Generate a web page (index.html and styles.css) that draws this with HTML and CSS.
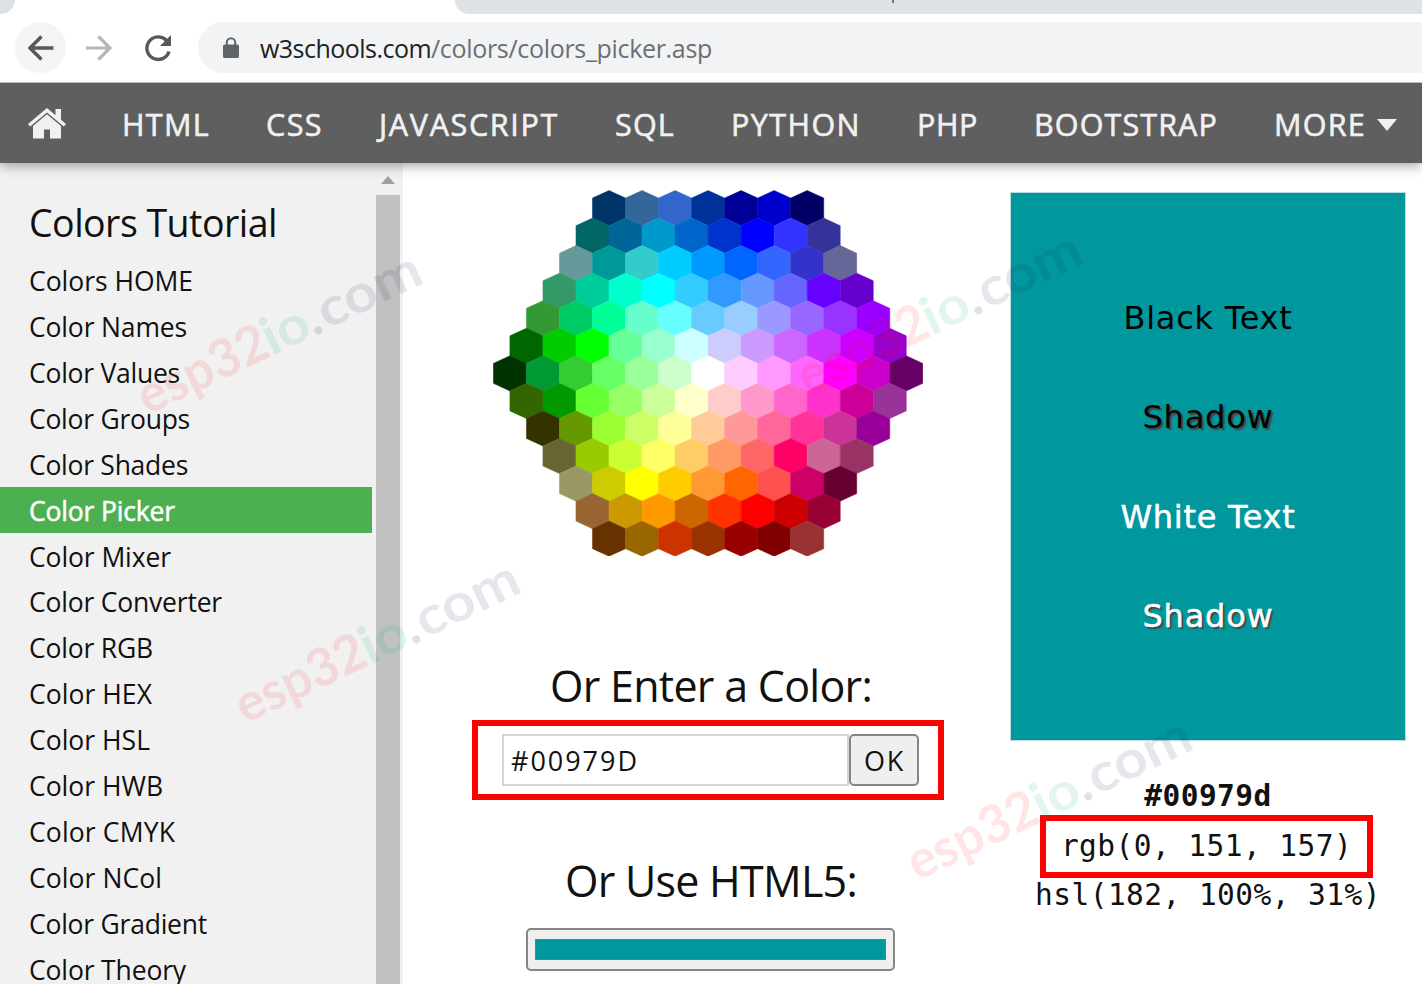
FILE: index.html
```html
<!DOCTYPE html>
<html lang="en">
<head>
<meta charset="utf-8">
<title>Colors Picker</title>
<link rel="stylesheet" href="styles.css">
</head>
<body>
<header class="browser">
  <div class="tabstrip">
    <div class="tab-prev"></div>
    <div class="tab-active"></div>
    <div class="tab-rest"><i class="tab-mark"></i></div>
  </div>
  <div class="toolbar">
    <span class="tool back"><svg width="26" height="26" viewBox="0 0 26 26" fill="none" stroke="#55585c" stroke-width="3.500"><path d="M25.500 13H3M13.500 1.500 2 13l11.500 11.500"/></svg></span>
    <span class="tool forward"><svg width="26" height="26" viewBox="0 0 26 26" fill="none" stroke="#b6b7b9" stroke-width="3.200"><path d="M0 13h23M12.500 1.500 24 13 12.500 24.500"/></svg></span>
    <span class="tool reload"><svg width="28" height="28" viewBox="0 0 28 28"><path d="M25 17.500A11.300 11.300 0 1 1 22.500 6.500" fill="none" stroke="#55585c" stroke-width="3.400"/><path d="M27 1v11H16z" fill="#55585c"/></svg></span>
    <div class="address">
      <svg class="lock" width="16" height="21" viewBox="0 0 16 21"><path d="M3.800 9V5.500a4.200 4.200 0 0 1 8.400 0V9" fill="none" stroke="#5f6368" stroke-width="2"/><rect y="7.500" width="16" height="13.500" rx="1.500" fill="#5f6368"/></svg>
      <span class="host" data-fit="171">w3schools.com</span><span class="path" data-fit="281">/colors/colors_picker.asp</span>
    </div>
  </div>
</header>

<nav class="topnav">
  <svg class="home" width="38" height="31" viewBox="0 0 38 31" fill="#f1f1f1"><path d="M19 0 0 16l2.200 2.400L19 4.500l16.800 13.900L38 16l-5-4.200V1h-5.500v6.200z"/><path d="M19 6.300 5 18v12.500h11v-9h6v9h11V18z"/></svg>
  <a data-fit="88">HTML</a><a data-fit="57">CSS</a><a data-fit="180">JAVASCRIPT</a><a data-fit="60">SQL</a><a data-fit="130">PYTHON</a><a data-fit="61">PHP</a><a data-fit="184">BOOTSTRAP</a><a data-fit="92">MORE</a>
  <svg class="caret" width="20" height="12" viewBox="0 0 20 12"><path d="M0 0h20L10 12z" fill="#f1f1f1"/></svg>
</nav>

<main class="page">
  <aside class="sidebar">
    <div class="menu">
      <h2 data-fit="248">Colors Tutorial</h2>
      <a data-fit="164">Colors HOME</a>
      <a data-fit="158">Color Names</a>
      <a data-fit="151">Color Values</a>
      <a data-fit="161">Color Groups</a>
      <a data-fit="159">Color Shades</a>
      <a class="active" data-fit="146">Color Picker</a>
      <a data-fit="142">Color Mixer</a>
      <a data-fit="193">Color Converter</a>
      <a data-fit="124">Color RGB</a>
      <a data-fit="123">Color HEX</a>
      <a data-fit="121">Color HSL</a>
      <a data-fit="134">Color HWB</a>
      <a data-fit="146">Color CMYK</a>
      <a data-fit="133">Color NCol</a>
      <a data-fit="178">Color Gradient</a>
      <a data-fit="157">Color Theory</a>
    </div>
    <div class="scrollbar">
      <svg width="14" height="8" viewBox="0 0 14 8"><path d="M0 8 7 0l7 8z" fill="#a0a0a0"/></svg>
      <div class="thumb"></div>
    </div>
  </aside>

  <section class="picker">
    <svg id="colormap" width="430" height="366" viewBox="0 0 430 366"></svg>
    <h3 data-fit="322">Or Enter a Color:</h3>
    <div class="entry">
      <div class="field"><span data-fit="128">#00979D</span></div>
      <div class="ok"><span data-fit="41">OK</span></div>
    </div>
    <h3 class="html5" data-fit="292">Or Use HTML5:</h3>
    <div class="swatch"><div class="swatch-fill"></div></div>
  </section>

  <section class="result">
    <div class="preview">
      <span class="dark"><b data-fit="169">Black Text</b></span>
      <span class="dark shade"><b data-fit="131">Shadow</b></span>
      <span><b data-fit="175">White Text</b></span>
      <span class="shade"><b data-fit="131">Shadow</b></span>
    </div>
    <div class="code hex">#00979d</div>
    <div class="code rgb">rgb(0, 151, 157)</div>
    <div class="code hsl">hsl(182, 100%, 31%)</div>
  </section>
</main>

<svg class="watermarks" width="1422" height="984" viewBox="0 0 1422 984">
  <defs>
    <g id="mark">
      <text x="-3" textLength="139" lengthAdjust="spacingAndGlyphs" fill="#ff0000" fill-opacity=".1">esp32</text>
      <text x="135" textLength="47" lengthAdjust="spacingAndGlyphs" fill="#00aa50" fill-opacity=".11">io</text>
      <circle cx="188" cy="-3" r="4" fill="#333333" fill-opacity=".15"/>
      <text x="196" textLength="110" lengthAdjust="spacingAndGlyphs" fill="#14205f" fill-opacity=".11">com</text>
    </g>
  </defs>
  <use href="#mark" transform="translate(150 414) rotate(-25.500)"/>
  <use href="#mark" transform="translate(248 723) rotate(-25.500)"/>
  <use href="#mark" transform="translate(810 394) rotate(-25.500)"/>
  <use href="#mark" transform="translate(920 880) rotate(-25.500)"/>
</svg>
<script src="page.js"></script>
</body>
</html>
```
FILE: styles.css
```css
* { box-sizing: border-box; }
body {
  margin: 0;
  width: 1422px;
  height: 984px;
  overflow: hidden;
  background: #fff;
  color: #111;
  font-family: "Open Sans", "Noto Sans", sans-serif;
}
svg { display: block; flex: none; }
[data-fit] { white-space: nowrap; }

.browser { height: 83px; border-bottom: 1px solid #bdbdbd; background: #fff; position: relative; z-index: 1; }
.tabstrip { display: flex; height: 14px; }
.tab-prev { width: 15px; background: #dee1e6; border-bottom-right-radius: 14px; }
.tab-active { width: 440px; }
.tab-rest { flex: 1; background: #dee1e6; border-bottom-left-radius: 14px; }
.tab-mark { display: block; width: 2px; height: 3px; margin-left: 437px; background: #777; }
.toolbar { display: flex; align-items: center; height: 67px; padding: 0 0 0 15px; }
.tool { display: flex; align-items: center; justify-content: center; width: 51px; height: 51px; border-radius: 50%; }
.back { background: #f4f4f4; }
.forward { margin-left: 7px; }
.reload { margin-left: 8px; }
.address {
  display: flex;
  align-items: center;
  flex: 1;
  height: 51px;
  margin-left: 15px;
  padding-left: 25px;
  border-radius: 26px 0 0 26px;
  background: #f1f3f4;
  font-size: 25px;
}
.lock { margin-right: 21px; }
.host { color: #202124; }
.path { color: #6b6f74; }

.topnav {
  display: flex;
  align-items: center;
  gap: 56px;
  height: 80px;
  padding-left: 28px;
  background: #5f5f5f;
  color: #f1f1f1;
  font-size: 30.500px;
  -webkit-text-stroke: .6px #f1f1f1;
  box-shadow: 0 2px 12px rgba(0, 0, 0, .4);
  position: relative;
}
.topnav a { line-height: 80px; padding-top: 2px; }
.home { margin-right: 0; }
.caret { margin: 3px 0 0 -45px; }

.page { display: flex; height: 821px; }
.sidebar { display: flex; width: 403px; background: #f1f1f1; }
.menu { width: 372px; padding-top: 30px; }
.menu h2 {
  margin: 0;
  height: 64px;
  padding-left: 29px;
  font-size: 37.500px;
  font-weight: 400;
  line-height: 60px;
}
.menu a { display: block; height: 45.930px; padding-left: 29px; font-size: 26.500px; line-height: 49.500px; }
.menu .active { background: #4caf50; color: #fff; -webkit-text-stroke: .5px #fff; }
.scrollbar { display: flex; flex-direction: column; align-items: center; width: 24px; margin-left: 4px; padding-top: 13px; }
.thumb { width: 24px; flex: 1; margin-top: 11px; background: #c1c1c1; }

.picker { display: flex; flex-direction: column; width: 607px; padding: 27px 0 0 69px; }
.picker > svg { margin-left: 21px; }
.picker h3 { margin: 97px 0 2px 78px; height: 65px; font-size: 43px; font-weight: 400; line-height: 65px; }
.entry { display: flex; width: 472px; height: 80px; padding: 8px 19px 8px 24px; border: 6px solid #f00; }
.field { flex: 1; height: 52px; border: 2px solid #d5d5d8; padding-left: 7px; font-size: 27px; line-height: 50px; }
.ok { width: 70px; height: 52px; border: 2px solid #858585; border-radius: 5px; background: #efefef; padding-left: 13px; font-size: 27px; line-height: 50px; }
.picker .html5 { margin: 48px 0 0 93px; }
.swatch { width: 369px; height: 43px; margin: 15px 0 0 54px; padding: 9px 7px; border: 2px solid #858585; border-radius: 5px; background: #efefef; }
.swatch-fill { height: 21px; border: 1px solid #777; background: #00979d; }

.result { width: 396px; padding-top: 29px; }
.preview {
  display: flex;
  flex-direction: column;
  height: 549px;
  padding-top: 76px;
  border: 1px solid #b9dcde;
  background: #00979d;
  color: #fff;
  font: 32px/99.300px "DejaVu Sans", sans-serif;
  -webkit-text-stroke: .5px currentColor;
  text-align: center;
}
.preview b { font-weight: 400; }
.dark { color: #000; -webkit-text-stroke-width: 0; }
.shade { text-shadow: 2px 2px 1px #444; }
.code { font: 29.500px/50px "DejaVu Sans Mono", monospace; letter-spacing: .440px; text-align: center; white-space: nowrap; }
.hex { margin-top: 30px; font-weight: 700; }
.rgb { width: 333px; height: 63px; margin: -6px 0 0 30px; border: 6px solid #f00; }
.hsl { margin: -8px -10px 0; }

.watermarks { position: absolute; top: 0; left: 0; z-index: 2; pointer-events: none; font: 700 53px Lato, sans-serif; }
```
FILE: page.js
```js
const rows = [
  "003366 336699 3366CC 003399 000099 0000CC 000066",
  "006666 006699 0099CC 0066CC 0033CC 0000FF 3333FF 333399",
  "669999 009999 33CCCC 00CCFF 0099FF 0066FF 3366FF 3333CC 666699",
  "339966 00CC99 00FFCC 00FFFF 33CCFF 3399FF 6699FF 6666FF 6600FF 6600CC",
  "339933 00CC66 00FF99 66FFCC 66FFFF 66CCFF 99CCFF 9999FF 9966FF 9933FF 9900FF",
  "006600 00CC00 00FF00 66FF99 99FFCC CCFFFF CCCCFF CC99FF CC66FF CC33FF CC00FF 9900CC",
  "003300 009933 33CC33 66FF66 99FF99 CCFFCC FFFFFF FFCCFF FF99FF FF66FF FF00FF CC00CC 660066",
  "336600 009900 66FF33 99FF66 CCFF99 FFFFCC FFCCCC FF99CC FF66CC FF33CC CC0099 993399",
  "333300 669900 99FF33 CCFF66 FFFF99 FFCC99 FF9999 FF6699 FF3399 CC3399 990099",
  "666633 99CC00 CCFF33 FFFF66 FFCC66 FF9966 FF6666 FF0066 CC6699 993366",
  "999966 CCCC00 FFFF00 FFCC00 FF9933 FF6600 FF5050 CC0066 660033",
  "996633 CC9900 FF9900 CC6600 FF3300 FF0000 CC0000 990033",
  "663300 996600 CC3300 993300 990000 800000 993333"
];

// Pointy-topped hexagons, each row centred in the map; a thin stroke closes the seams.
const W = 33.03, PITCH = 27.55, SHOULDER = 7.6, H = PITCH + SHOULDER;
document.getElementById("colormap").innerHTML = rows.map((row, r) => {
  const cells = row.split(" ");
  const left = (13 - cells.length) * W / 2 + 0.4;
  const y = r * PITCH + 0.5;
  return cells.map((c, i) => {
    const x = left + i * W;
    const pts = [[x + W / 2, y], [x + W, y + SHOULDER], [x + W, y + PITCH], [x + W / 2, y + H], [x, y + PITCH], [x, y + SHOULDER]];
    return `<polygon fill="#${c}" stroke="#${c}" stroke-width=".5" points="${pts.map(p => p.map(n => n.toFixed(2)).join()).join(" ")}"/>`;
  }).join("");
}).join("");

// Track each label to its set width.
for (const el of document.querySelectorAll("[data-fit]")) {
  const range = document.createRange();
  range.selectNodeContents(el);
  const natural = range.getBoundingClientRect().width;
  el.style.letterSpacing = (el.dataset.fit - natural) / el.textContent.length + "px";
}
```
